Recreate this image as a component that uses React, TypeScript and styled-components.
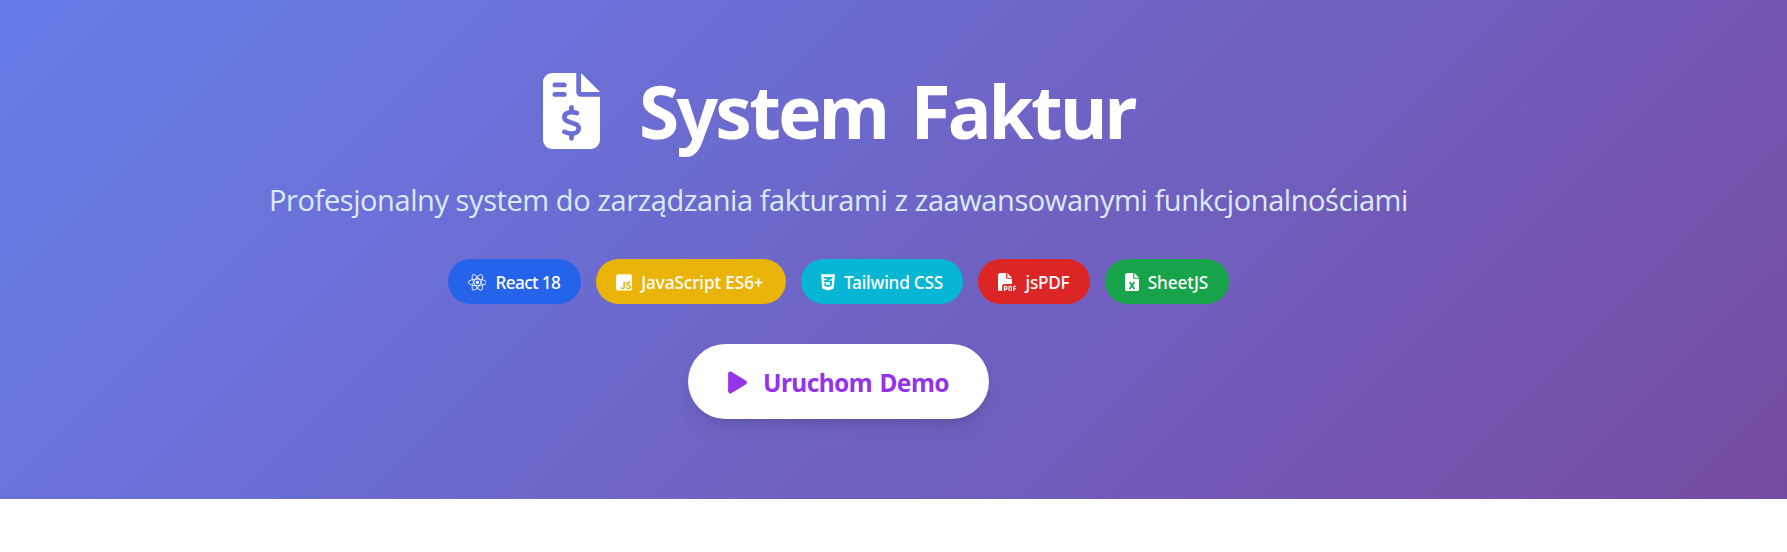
import React from 'react';
import styled, { createGlobalStyle } from 'styled-components';
import type { IconType } from 'react-icons';
import {
  FaFileInvoiceDollar,
  FaReact,
  FaSquareJs,
  FaCss3Alt,
  FaFilePdf,
  FaFileExcel,
  FaPlay,
} from 'react-icons/fa6';

const GlobalStyle = createGlobalStyle`
  *, *::before, *::after { box-sizing: border-box; }
  body {
    margin: 0;
    background: #fff;
    font-family: 'Segoe UI', 'Noto Sans', 'Open Sans', sans-serif;
  }
`;

const Hero = styled.header`
  height: 499px;
  padding-top: 73px;
  color: #fff;
  background: linear-gradient(135deg, #667eea 0%, #764ba2 100%);
`;

const Container = styled.div`
  width: 1677px;
  display: flex;
  flex-direction: column;
  align-items: center;
`;

const Title = styled.h1`
  margin: 0 0 31px;
  display: flex;
  align-items: center;
  gap: 39.5px;
  font-size: 73px;
  line-height: 76px;
  font-weight: 700;
  letter-spacing: -2.8px;
  word-spacing: 7px;
  white-space: nowrap;

  svg {
    flex: none;
    width: 57px;
    height: 76px;
  }
`;

const Subtitle = styled.p`
  margin: 0 0 39px;
  font-family: 'Open Sans', 'Noto Sans', sans-serif;
  font-size: 29px;
  line-height: 40px;
  letter-spacing: -0.42px;
  color: #dbeafe;
  white-space: nowrap;
`;

const Badges = styled.div`
  display: flex;
  gap: 15px;
  margin-bottom: 40px;
`;

interface BadgeProps {
  $color: string;
  $width: number;
  $iconWidth: number;
  $gap: number;
  $tracking: number;
}

const Badge = styled.span<BadgeProps>`
  width: ${(p) => p.$width}px;
  height: 45px;
  padding: 1px 0 0 19.5px;
  display: flex;
  align-items: center;
  gap: ${(p) => p.$gap}px;
  border-radius: 999px;
  background: ${(p) => p.$color};
  font-size: 17.2px;
  font-weight: 550;
  letter-spacing: ${(p) => p.$tracking}px;
  white-space: nowrap;

  svg {
    flex: none;
    width: ${(p) => p.$iconWidth}px;
    height: 18.7px;
  }
`;

const DemoButton = styled.button`
  width: 301px;
  height: 75px;
  padding: 2px 0 0 40px;
  display: flex;
  align-items: center;
  gap: 16px;
  border: 0;
  border-radius: 999px;
  background: #fff;
  color: #9333ea;
  font-family: inherit;
  font-size: 24.5px;
  font-weight: 700;
  letter-spacing: -0.58px;
  word-spacing: 1.6px;
  white-space: nowrap;
  box-shadow: 0 12px 18px -4px rgba(0, 0, 0, 0.1), 0 5px 7px -5px rgba(0, 0, 0, 0.1);
  cursor: pointer;

  svg {
    flex: none;
    width: 19px;
    height: 25px;
  }
`;

interface Technology {
  label: string;
  icon: IconType;
  color: string;
  width: number;
  iconWidth: number;
  gap: number;
  tracking: number;
}

const technologies: Technology[] = [
  { label: 'React 18', icon: FaReact, color: '#2563eb', width: 133, iconWidth: 18.7, gap: 9.3, tracking: -0.62 },
  { label: 'JavaScript ES6+', icon: FaSquareJs, color: '#eab308', width: 190, iconWidth: 16.4, gap: 9.3, tracking: -0.1 },
  { label: 'Tailwind CSS', icon: FaCss3Alt, color: '#06b6d4', width: 162, iconWidth: 14, gap: 9.5, tracking: -0.22 },
  { label: 'jsPDF', icon: FaFilePdf, color: '#dc2626', width: 112, iconWidth: 18.7, gap: 9.3, tracking: -0.25 },
  { label: 'SheetJS', icon: FaFileExcel, color: '#16a34a', width: 124, iconWidth: 14, gap: 9.2, tracking: -0.07 },
];

export default function App() {
  return (
    <>
      <GlobalStyle />
      <Hero>
        <Container>
          <Title>
            <FaFileInvoiceDollar />
            System Faktur
          </Title>
          <Subtitle>
            Profesjonalny system do zarządzania fakturami z zaawansowanymi funkcjonalnościami
          </Subtitle>
          <Badges>
            {technologies.map(({ label, icon: Icon, color, width, iconWidth, gap, tracking }) => (
              <Badge
                key={label}
                $color={color}
                $width={width}
                $iconWidth={iconWidth}
                $gap={gap}
                $tracking={tracking}
              >
                <Icon />
                {label}
              </Badge>
            ))}
          </Badges>
          <DemoButton>
            <FaPlay />
            Uruchom Demo
          </DemoButton>
        </Container>
      </Hero>
    </>
  );
}
